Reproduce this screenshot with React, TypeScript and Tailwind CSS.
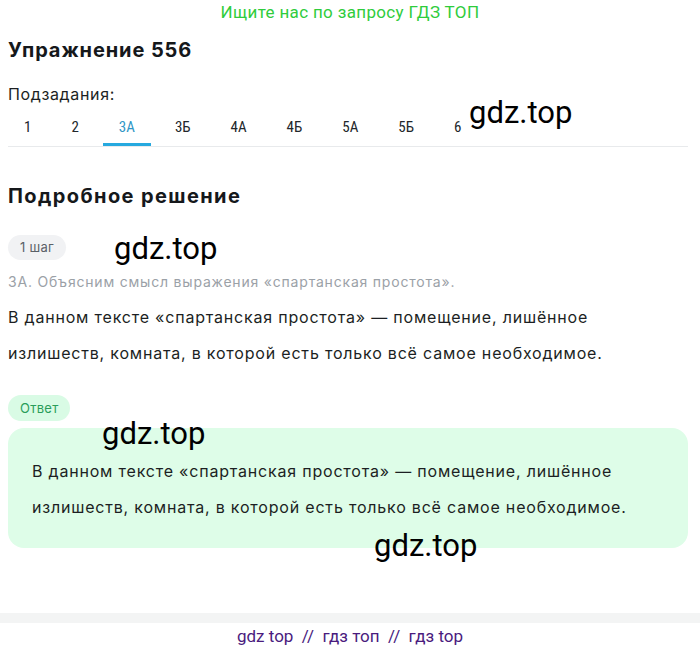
import React from "react";

const tabs = ["1", "2", "3А", "3Б", "4А", "4Б", "5А", "5Б", "6"];
const active = "3А";

const answer =
  "В данном тексте «спартанская простота» — помещение, лишённое излишеств, комната, в которой есть только всё самое необходимое.";

// watermark laid over the content
function Mark({ className }: { className: string }) {
  return (
    <span className={`pointer-events-none absolute font-[Roboto,sans-serif] text-[31px] leading-none tracking-normal text-black ${className}`}>
      gdz.top
    </span>
  );
}

export default function App() {
  return (
    <div className="relative min-h-[650px] w-[700px] bg-white font-[Inter,'Noto_Sans',sans-serif] tracking-[0.05em] text-[#1c1f23]">
      <div className="text-center font-[Roboto,sans-serif] text-[17px] leading-[24px] tracking-[0.02em] text-[#2fcc3c]">
        Ищите нас по запросу ГДЗ ТОП
      </div>

      <div className="pl-2 pr-3">
        <h1 className="mt-[12px] text-[20px] font-bold leading-[28px] tracking-[0.045em] text-[#15181b]">Упражнение 556</h1>

        <div className="mt-[18px] text-[16px] leading-[24px] tracking-[0.04em]">Подзадания:</div>
        <div className="flex gap-2 border-b border-[#e8eaec]">
          {tabs.map((t) => (
            <div
              key={t}
              className={`border-b-[3px] px-4 pb-[6px] pt-[11px] font-[Roboto,sans-serif] text-[15px] font-stretch-condensed leading-[20px] tracking-normal ${
                t === active ? "border-[#26a9df] text-[#3096c6]" : "border-transparent text-[#22272b]"
              }`}
            >
              {t}
            </div>
          ))}
        </div>

        <h2 className="mt-[35px] text-[20px] font-bold leading-[28px] tracking-[0.07em] text-[#15181b]">Подробное решение</h2>

        <div className="mt-[25px] flex">
          <span className="rounded-full bg-[#f1f2f4] px-3 py-[3px] text-[13px] leading-[19px] tracking-[0.02em] text-[#5b6168]">
            1 шаг
          </span>
        </div>

        <p className="mt-[12px] text-[14px] leading-[20px] text-[#9ba1a7]">
          3А. Объясним смысл выражения «спартанская простота».
        </p>
        <p className="mt-[7px] max-w-[640px] text-[16px] leading-[36px]">{answer}</p>

        <div className="mt-[24px] flex">
          <span className="rounded-full bg-[#d9fbe5] px-3 py-[3px] text-[13px] leading-[20px] tracking-[0.02em] text-[#2a9d5a]">
            Ответ
          </span>
        </div>

        <div className="mt-[7px] rounded-2xl bg-[#defde8] px-6 pb-[23px] pt-[25px]">
          <p className="max-w-[632px] text-[16px] leading-[36px]">{answer}</p>
        </div>
      </div>

      <div className="mt-[65px] h-[10px] bg-[#f3f4f4]" />
      <div className="pt-px text-center font-[Roboto,sans-serif] text-[17px] leading-[24px] tracking-normal text-[#4a1b7e]">
        gdz top&nbsp; //&nbsp; гдз топ&nbsp; //&nbsp; гдз top
      </div>

      <Mark className="left-[469px] top-[97px]" />
      <Mark className="left-[114px] top-[233px]" />
      <Mark className="left-[102px] top-[418px]" />
      <Mark className="left-[374px] top-[530px]" />
    </div>
  );
}
